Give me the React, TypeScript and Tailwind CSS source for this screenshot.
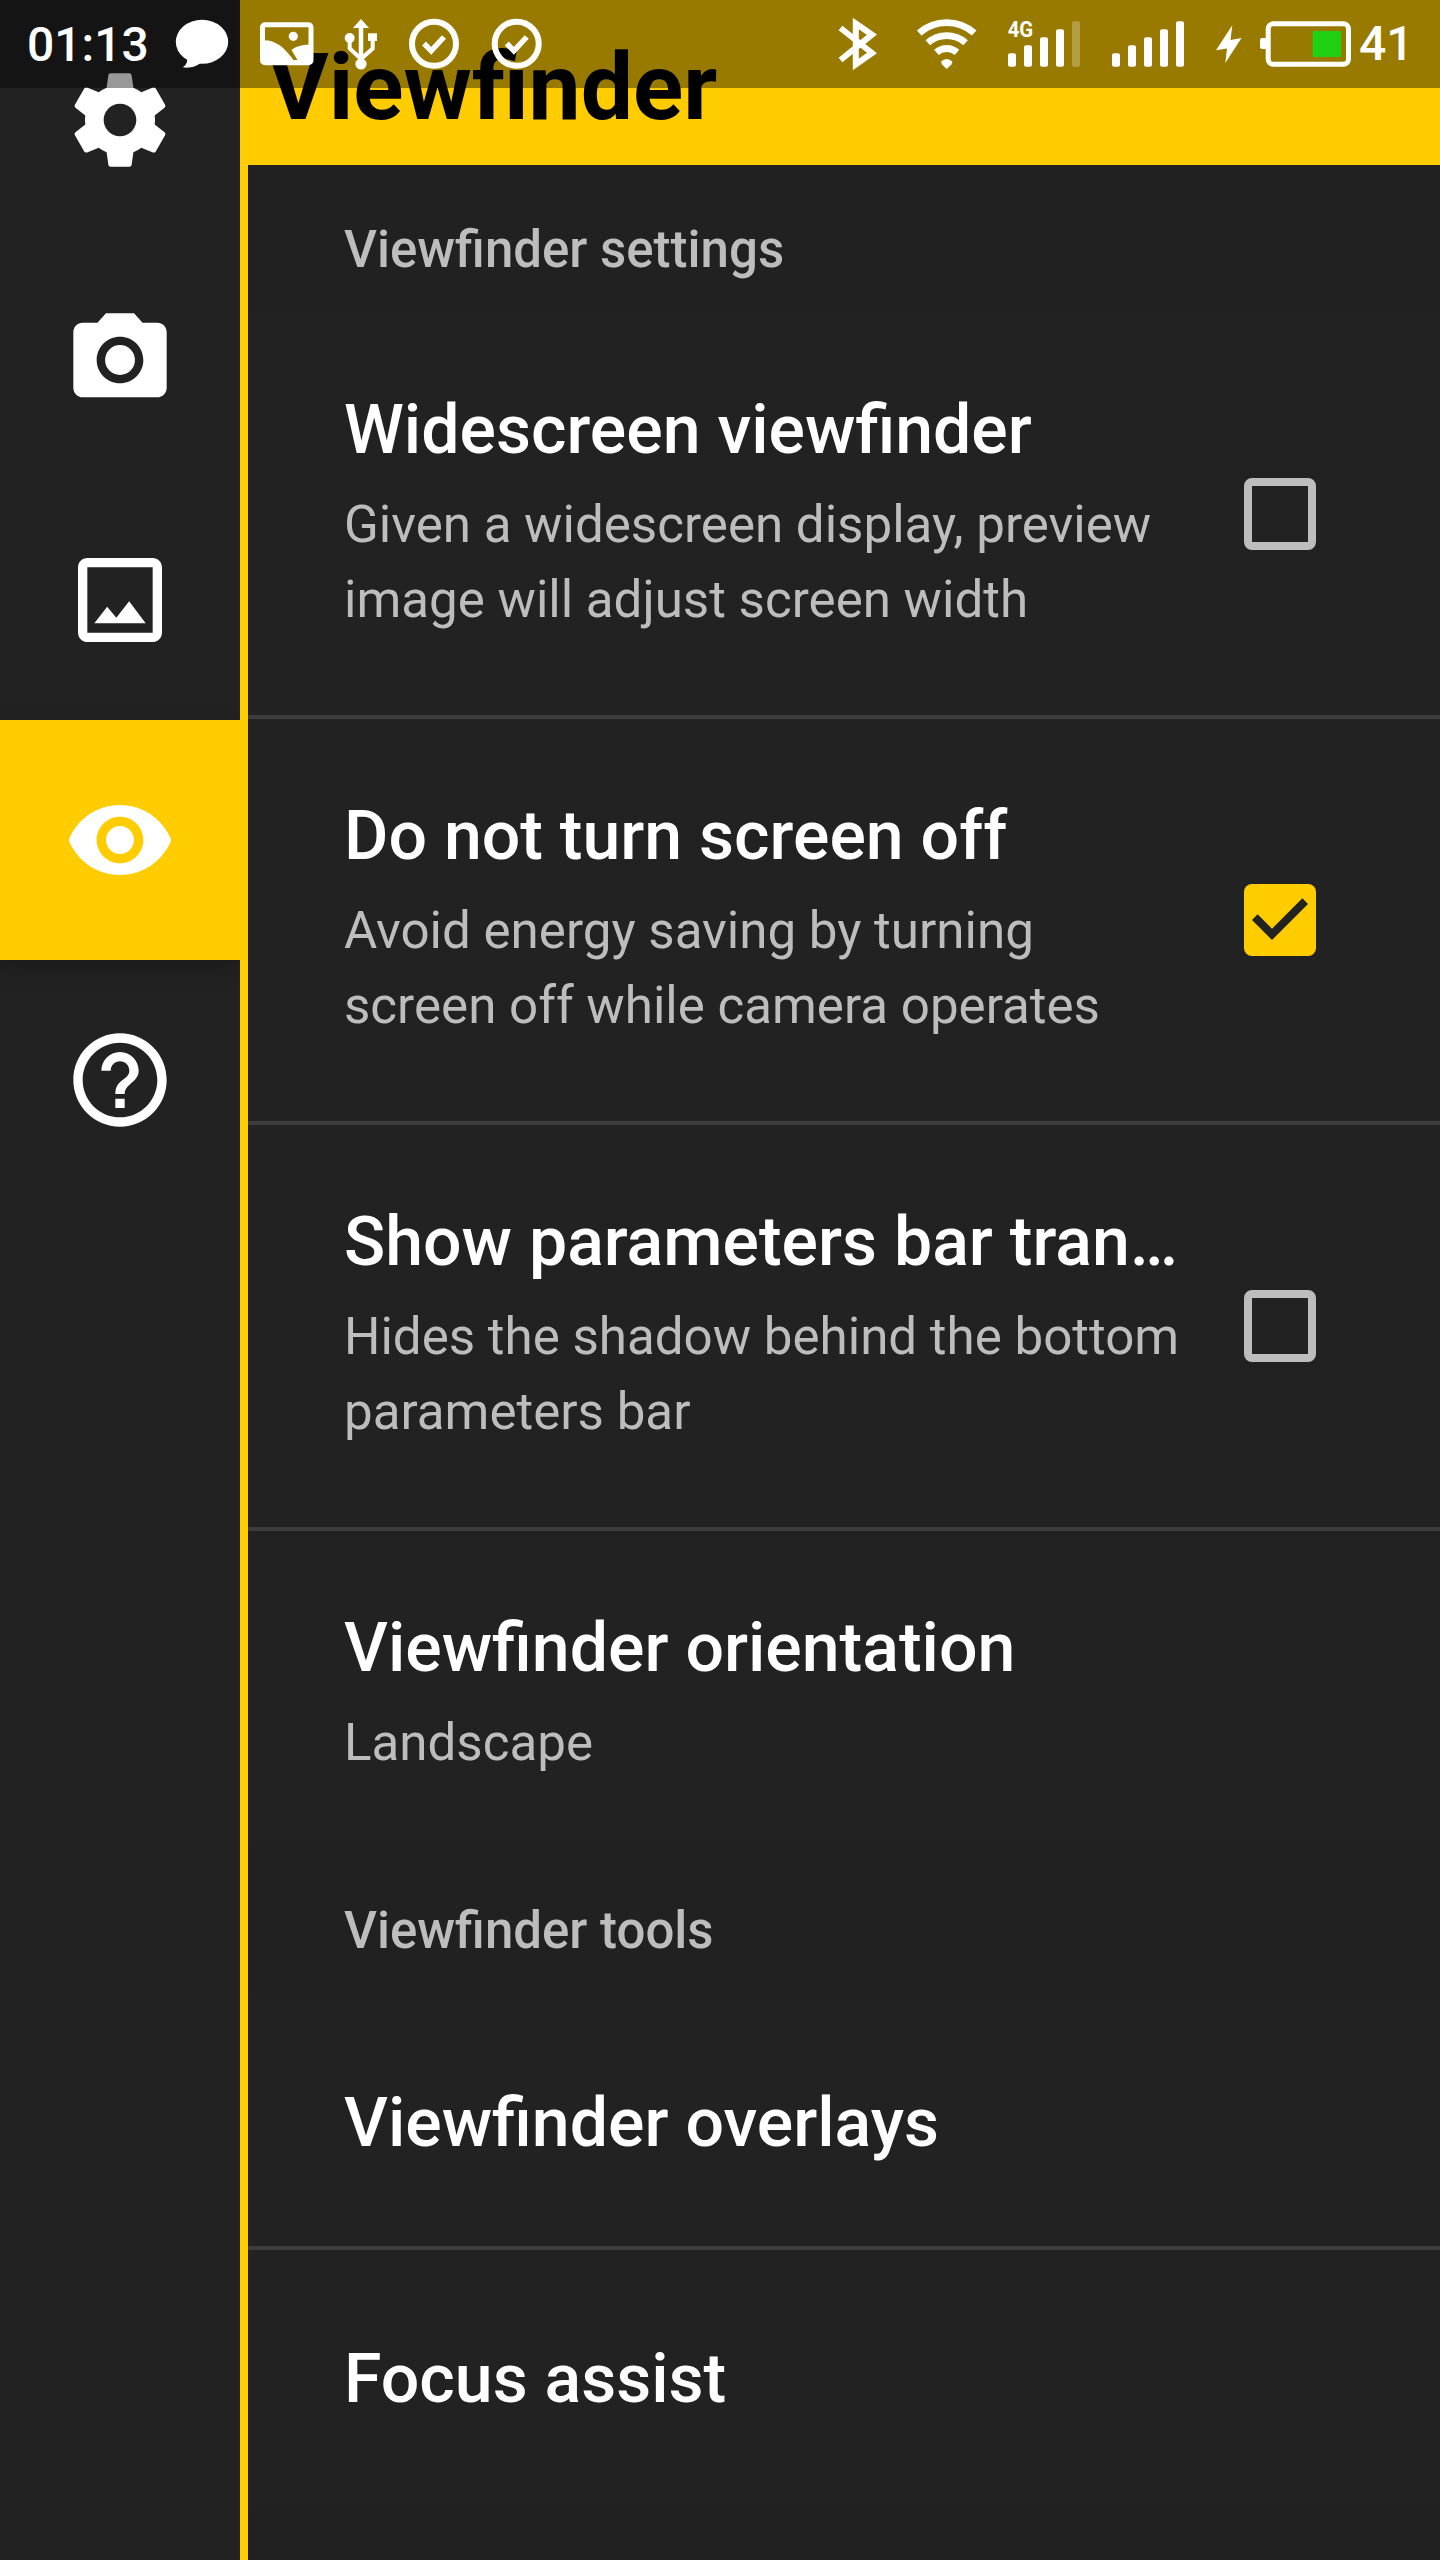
import type { ReactNode } from "react";
import { MdCropOriginal, MdHelpOutline, MdPhotoCamera, MdVisibility } from "react-icons/md";

/* ---------- status bar ---------- */

// One slot of the status bar; drawings share the bar's own coordinate space.
function Slot({ x, w, children }: { x: number; w: number; children: ReactNode }) {
  return (
    <svg className="shrink-0" width={w} height={88} viewBox={`${x} 0 ${w} 88`} fill="none">
      {children}
    </svg>
  );
}

function TaskDone({ x, cx }: { x: number; cx: number }) {
  return (
    <Slot x={x} w={82}>
      <circle cx={cx} cy={43.7} r={22} stroke="#fff" strokeWidth={6} />
      <path d={`M${cx - 10} 43.5l7.2 7.4L${cx + 10} 37`} stroke="#fff" strokeWidth={5.4} />
    </Slot>
  );
}

function SignalBars({ x, faded }: { x: number; faded?: boolean }) {
  return (
    <>
      {[53.3, 45.3, 37.3, 29.3, 21.3].map((top, i) => (
        <rect
          key={top}
          x={x + i * 16}
          y={top}
          width={8}
          height={66.7 - top}
          rx={2}
          fill="#fff"
          opacity={faded && i === 4 ? 0.27 : 1}
        />
      ))}
    </>
  );
}

function StatusBar() {
  return (
    <div className="absolute inset-x-0 top-0 z-10 flex h-[88px] justify-between bg-black/40 text-[48px] leading-[88px] font-medium text-white">
      <div className="flex">
        <span className="w-[168px] pt-px pl-[27px]">01:13</span>
        <Slot x={168} w={77}>
          <ellipse cx={202} cy={41.8} rx={26.2} ry={22} fill="#fff" />
          <path d="M187 58c1 4-1 7-4.3 9.3 6 1.2 14-.3 19-5.3z" fill="#fff" />
        </Slot>
        <Slot x={245} w={85}>
          <rect x={262.5} y={24.8} width={48.5} height={38} rx={2.5} stroke="#fff" strokeWidth={5} />
          <circle cx={293.3} cy={36.3} r={4.6} fill="#fff" />
          <path
            d="M264 40.3c12 .2 20 6.700 29.500 19.700h4L291.500 50c4-3.500 10-5 18-5.500V64H264z"
            fill="#fff"
          />
        </Slot>
        <Slot x={330} w={63}>
          <path d="M361 19l8 9h-16z" fill="#fff" />
          <path d="M361 26v38" stroke="#fff" strokeWidth={4.5} />
          <path d="M349.7 38v10.5L361 59M372.7 38v10.5L361 59" stroke="#fff" strokeWidth={4} />
          <circle cx={349.7} cy={38} r={5} fill="#fff" />
          <rect x={368} y={33.3} width={9} height={7.7} fill="#fff" />
          <circle cx={361} cy={64} r={5.6} fill="#fff" />
        </Slot>
        <TaskDone x={393} cx={434} />
        <TaskDone x={475} cx={516.7} />
      </div>
      <div className="flex">
        <Slot x={825} w={75}>
          <path d="M840.5 28L872 53l-16.2 11.5V23.5L872 34.7 840.5 60" stroke="#fff" strokeWidth={6} />
        </Slot>
        <Slot x={900} w={95}>
          <path
            d="M919.2 33a41.5 41.5 0 0 1 55 0M927.8 42.7a28.5 28.5 0 0 1 37.8 0M936.4 52.4a15.5 15.5 0 0 1 20.6 0"
            stroke="#fff"
            strokeWidth={6.8}
          />
          <path d="M941 61.5q5.7-5 11.4 0l-1 3-4.7 4.5-4.7-4.5z" fill="#fff" />
        </Slot>
        <Slot x={995} w={100}>
          <text
            className="font-bold"
            x={1007.7}
            y={37}
            fill="#fff"
            fontSize={22}
            textLength={25.5}
            lengthAdjust="spacingAndGlyphs"
          >
            4G
          </text>
          <SignalBars x={1008} faded />
        </Slot>
        <Slot x={1095} w={105}>
          <SignalBars x={1112} />
        </Slot>
        <Slot x={1200} w={50}>
          <path d="M1232.3 25.3L1216 50.3l11-1.8L1225.3 63l16.2-25-11 2z" fill="#fff" />
        </Slot>
        <Slot x={1250} w={109}>
          <rect x={1268.2} y={23.8} width={80.3} height={40.4} rx={5} stroke="#fff" strokeWidth={5} />
          <rect x={1260} y={38} width={8} height={11} rx={2} fill="#fff" />
          <rect x={1312.7} y={31} width={28.3} height={26} rx={1} fill="#20d015" />
        </Slot>
        <span className="w-[81px]">41</span>
      </div>
    </div>
  );
}

/* ---------- navigation rail ---------- */

function Gear() {
  return (
    <svg className="size-[112px]" viewBox="0 0 24 24" fill="currentColor">
      <path d="M19.43 12.98c.04-.32.07-.64.07-.98s-.03-.66-.07-.98l2.11-1.65c.19-.15.24-.42.12-.64l-2-3.46c-.12-.22-.39-.3-.61-.22l-2.49 1c-.52-.4-1.08-.73-1.69-.98l-.38-2.65A.488.488 0 0 0 14 2h-4c-.25 0-.46.18-.49.42l-.38 2.65c-.61.25-1.17.59-1.69.98l-2.49-1c-.23-.09-.49 0-.61.22l-2 3.46c-.13.22-.07.49.12.64l2.11 1.65c-.04.32-.07.65-.07.98s.03.66.07.98l-2.11 1.65c-.19.15-.24.42-.12.64l2 3.46c.12.22.39.3.61.22l2.49-1c.52.4 1.08.73 1.69.98l.38 2.65c.03.24.24.42.49.42h4c.25 0 .46-.18.49-.42l.38-2.65c.61-.25 1.17-.59 1.69-.98l2.49 1c.23.09.49 0 .61-.22l2-3.46c.12-.22.07-.49-.12-.64l-2.11-1.65zM12 15.5c-1.93 0-3.5-1.57-3.5-3.5s1.57-3.5 3.5-3.5 3.5 1.57 3.5 3.5-1.57 3.5-3.5 3.5z" />
    </svg>
  );
}

function NavItem({ active, children }: { active?: boolean; children: ReactNode }) {
  return (
    <button
      className={
        active
          ? "flex h-[240px] w-full shrink-0 items-center justify-center bg-[#ffcc00] shadow-[0_8px_20px_rgba(0,0,0,0.25)]"
          : "flex h-[240px] w-full shrink-0 items-center justify-center"
      }
    >
      {children}
    </button>
  );
}

/* ---------- settings list ---------- */

function CheckBox({ checked }: { checked: boolean }) {
  if (!checked) {
    return <span className="size-[72px] shrink-0 rounded-[8px] border-8 border-[#bdbdbd]" />;
  }
  return (
    <span className="size-[72px] shrink-0 rounded-[8px] bg-[#ffcc00]">
      <svg className="size-full" viewBox="3 3 18 18" fill="#222222">
        <path d="M10 17l-5-5 1.41-1.41L10 14.17l7.59-7.59L19 8z" />
      </svg>
    </span>
  );
}

function SectionTitle({ children }: { children?: ReactNode }) {
  return (
    <h2 className="h-[148px] shrink-0 bg-[#212121] pt-[22px] pl-24 text-[51px] leading-[126px] font-medium text-[#bdbdbd]">
      {children}
    </h2>
  );
}

function Toggle({ title, lines, checked }: { title: string; lines: [string, string]; checked: boolean }) {
  return (
    <div className="flex h-[406px] shrink-0 items-center justify-between border-b-4 border-[#3d3d3d] pr-[124px] pl-24">
      <div className="h-full pt-[77px] whitespace-nowrap">
        <h3 className="text-[68px] leading-[80px] font-medium text-white">{title}</h3>
        <p className="mt-[17px] text-[51.1px] leading-[75px] text-[#bdbdbd]">
          {lines[0]}
          <br />
          {lines[1]}
        </p>
      </div>
      <CheckBox checked={checked} />
    </div>
  );
}

function Link({ title, divider }: { title: string; divider?: boolean }) {
  return (
    <div
      className={
        divider
          ? "h-[256px] shrink-0 border-b-4 border-[#3d3d3d] pt-[89px] pl-24"
          : "h-[256px] shrink-0 pt-[89px] pl-24"
      }
    >
      <h3 className="text-[68px] leading-[80px] font-medium text-white">{title}</h3>
    </div>
  );
}

export default function App() {
  return (
    <div className="relative flex h-[2560px] w-[1440px] overflow-hidden bg-[#222222] font-['Roboto',sans-serif]">
      <StatusBar />

      <nav className="flex w-[240px] shrink-0 flex-col overflow-hidden text-white">
        <NavItem>
          <Gear />
        </NavItem>
        <NavItem>
          <MdPhotoCamera className="size-[112px]" />
        </NavItem>
        <NavItem>
          <MdCropOriginal className="size-[112px]" />
        </NavItem>
        <NavItem active>
          <MdVisibility className="size-[112px]" />
        </NavItem>
        <NavItem>
          <MdHelpOutline className="size-[112px]" />
        </NavItem>
      </nav>

      <main className="flex min-w-0 grow flex-col overflow-hidden border-l-8 border-[#ffcc00]">
        <header className="h-[165px] shrink-0 bg-[#ffcc00] pt-[34px] pl-5">
          <h1 className="text-[93px] leading-[107px] font-bold text-black">Viewfinder</h1>
        </header>

        <SectionTitle>Viewfinder settings</SectionTitle>
        <Toggle
          title="Widescreen viewfinder"
          lines={["Given a widescreen display, preview", "image will adjust screen width"]}
          checked={false}
        />
        <Toggle
          title="Do not turn screen off"
          lines={["Avoid energy saving by turning", "screen off while camera operates"]}
          checked
        />
        <Toggle
          title="Show parameters bar tran…"
          lines={["Hides the shadow behind the bottom", "parameters bar"]}
          checked={false}
        />
        <div className="h-[315px] shrink-0 pt-[77px] pl-24">
          <h3 className="text-[68px] leading-[80px] font-medium text-white">Viewfinder orientation</h3>
          <p className="mt-[17px] text-[51.1px] leading-[75px] text-[#bdbdbd]">Landscape</p>
        </div>

        <SectionTitle>Viewfinder tools</SectionTitle>
        <Link title="Viewfinder overlays" divider />
        <Link title="Focus assist" />
        <SectionTitle />
      </main>
    </div>
  );
}
